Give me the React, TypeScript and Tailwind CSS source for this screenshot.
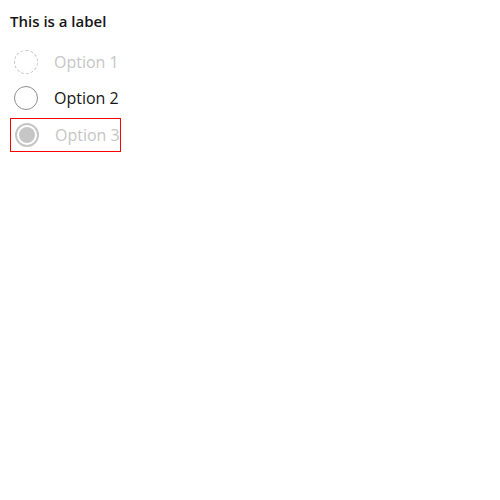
import React from "react"

type Opt = { label: string; state: "disabled" | "normal" | "checkedDisabled" }

const OPTIONS: Opt[] = [
  { label: "Option 1", state: "disabled" },
  { label: "Option 2", state: "normal" },
  { label: "Option 3", state: "checkedDisabled" },
]

function Circle({ state }: { state: Opt["state"] }) {
  if (state === "disabled") {
    return (
      <span className="block h-6 w-6 shrink-0 rounded-full border border-dashed border-[#c6c6c6]" />
    )
  }
  if (state === "normal") {
    return <span className="block h-6 w-6 shrink-0 rounded-full border border-[#8d8d8d]" />
  }
  return (
    <span className="flex h-6 w-6 shrink-0 items-center justify-center rounded-full border-2 border-[#c6c6c6]">
      <span className="block h-4 w-4 rounded-full bg-[#c6c6c6]" />
    </span>
  )
}

export default function App() {
  return (
    <div
      className="px-[10px] pt-[11px]"
      style={{ fontFamily: '"Open Sans", sans-serif' }}
    >
      <div className="text-[15px] font-semibold leading-[20px] text-[#161616]">
        This is a label
      </div>
      <div className="mt-[13px] flex flex-col items-start">
        {OPTIONS.map((o) => (
          <div
            key={o.label}
            className={`flex items-center gap-[16px] pl-[4px] ${
              o.state === "checkedDisabled"
                ? "mt-[2px] h-[34px] border border-[#ff0000]"
                : "h-[36px]"
            }`}
          >
            <Circle state={o.state} />
            <span
              className={`text-[16px] leading-[22px] ${
                o.state === "normal" ? "text-[#161616]" : "text-[#c6c6c6]"
              }`}
            >
              {o.label}
            </span>
          </div>
        ))}
      </div>
    </div>
  )
}
